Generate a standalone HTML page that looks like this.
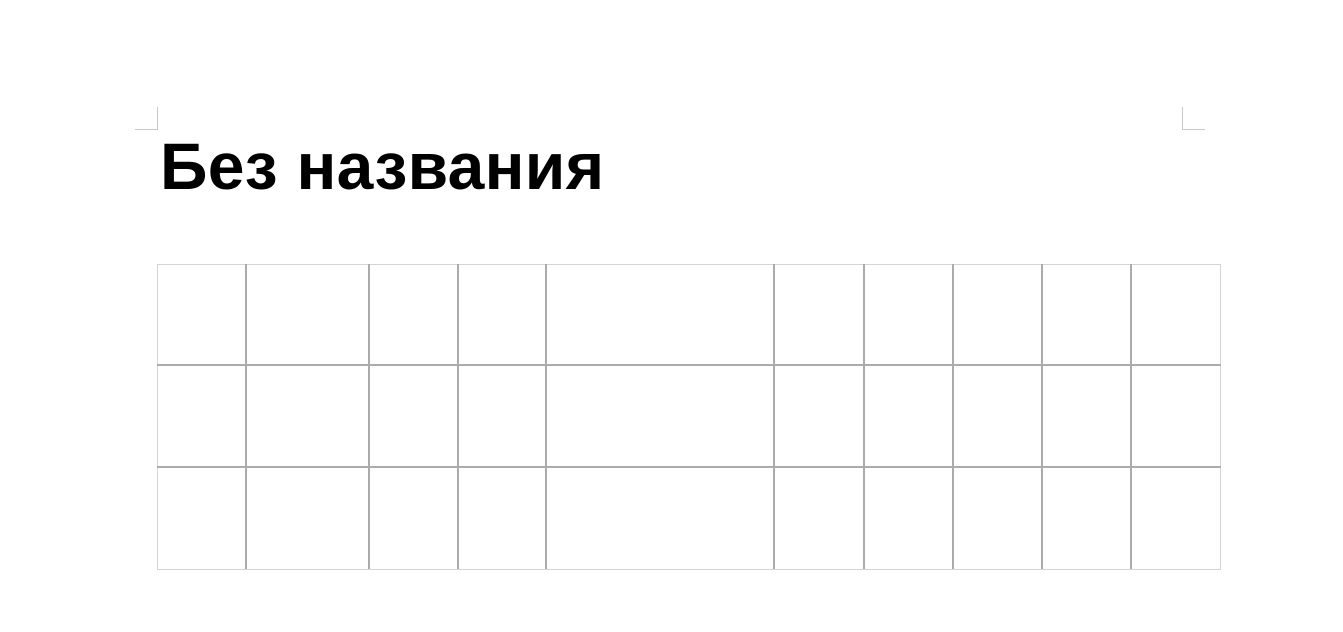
<!DOCTYPE html>
<html><head><meta charset="utf-8"><style>
body{margin:0;width:1343px;height:632px;background:#fff;position:relative;overflow:hidden;font-family:"Liberation Sans","DejaVu Sans",sans-serif}
.a{position:absolute}
.h{position:absolute;font-weight:bold;font-size:66px;left:160px;top:126px;line-height:80px;color:#000;letter-spacing:0.3px;white-space:nowrap}
.v{position:absolute;top:264px;height:305px;width:2px;background:#ababab}
.r{position:absolute;left:157px;width:1064px;height:2px;background:#ababab}
</style></head><body>
<div class="a" style="left:157px;top:107px;width:1px;height:22px;background:#c8c8c8"></div>
<div class="a" style="left:135px;top:129px;width:23px;height:1px;background:#c8c8c8"></div>
<div class="a" style="left:1182px;top:107px;width:1px;height:22px;background:#c8c8c8"></div>
<div class="a" style="left:1182px;top:129px;width:23px;height:1px;background:#c8c8c8"></div>
<div class="h">Без названия</div>
<div class="a" style="left:157px;top:264px;width:1062px;height:304px;border:1px solid #d4d4d4"></div>
<div class="r" style="top:364px"></div>
<div class="r" style="top:466px"></div>
<div class="v" style="left:245px"></div>
<div class="v" style="left:368px"></div>
<div class="v" style="left:457px"></div>
<div class="v" style="left:545px"></div>
<div class="v" style="left:773px"></div>
<div class="v" style="left:863px"></div>
<div class="v" style="left:952px"></div>
<div class="v" style="left:1041px"></div>
<div class="v" style="left:1130px"></div>
</body></html>
